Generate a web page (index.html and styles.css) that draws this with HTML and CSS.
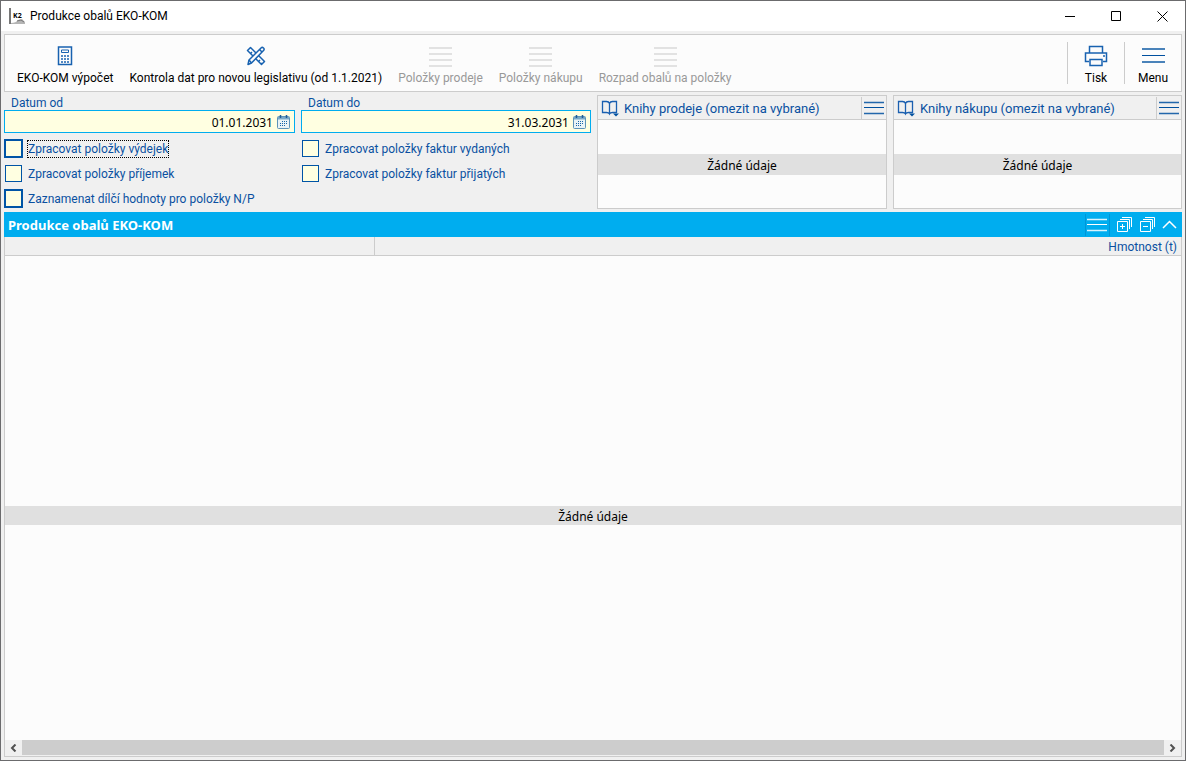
FILE: index.html
```html
<!DOCTYPE html>
<html lang="cs">
<head>
<meta charset="utf-8">
<meta name="viewport" content="width=device-width, initial-scale=1">
<title>Produkce obalů EKO-KOM</title>
<link rel="stylesheet" href="styles.css">
</head>
<body>
<svg class="defs" aria-hidden="true">
  <symbol id="lines" viewBox="0 0 23 20"><path d="M0 3h23M0 16h23" stroke-width="2" opacity=".7"/><path d="M0 9.500h23" stroke-width="1"/></symbol>
  <symbol id="list" viewBox="0 0 23 20"><path d="M0 1h23M0 7h23M0 13h23M0 19h23" stroke-width="2"/></symbol>
  <symbol id="small-lines" viewBox="0 0 20 14"><path d="M0 1.5h20M0 12.5h20" stroke-width="1.6" opacity=".85"/><path d="M0 6.5h20" stroke-width="1"/></symbol>
  <symbol id="calendar" viewBox="0 0 13 14"><rect x=".5" y="1.5" width="12" height="12" rx="1" fill="#e9f3f5" stroke="#5d93b8"/><path d="M1 2h11v2.500H1z" fill="#78a9c8"/><path d="M3.500 0v3M9.500 0v3" stroke="#1f5c96" stroke-width="1.500"/><path d="M5 6.500h6M3 8.500h8M3 10.500h6" stroke="#1766a8" stroke-dasharray="1 1" stroke-width="1.200"/></symbol>
  <symbol id="book" viewBox="0 0 18 17"><path d="M8.500 3.500C8 2 7 1.500 5.500 1.500H1.500v11h4c1.500 0 2.500.5 3 1.500.5-1 1.500-1.500 3-1.500h4v-11h-4C10 1.500 9 2 8.500 3.500zv10" fill="none" stroke="#1a5fb0" stroke-width="1.300"/><path d="M12 13.500h6l-3 3z" fill="#00509f"/></symbol>
</svg>
<div class="window">
  <header class="titlebar">
    <svg class="logo" width="16" height="16" viewBox="0 0 16 16" aria-hidden="true"><path d="M0 0h2v16H0z" fill="#777"/><path d="M2 15q5 0 7-3l4-1 3 3v2H2z" fill="#b5b5b5"/><path d="M8 13l4-1 3 2" fill="none" stroke="#777"/><text x="4" y="10">K2</text></svg>
    <h1 class="caption">Produkce obalů EKO-KOM</h1>
    <div class="window-buttons">
      <button class="window-button" aria-label="Minimalizovat"><svg width="11" height="11" viewBox="0 0 11 11"><path d="M0 5.500h10"/></svg></button>
      <button class="window-button" aria-label="Maximalizovat"><svg width="11" height="11" viewBox="0 0 11 11"><path d="M.5.5h9v9h-9z"/></svg></button>
      <button class="window-button" aria-label="Zavřít"><svg width="11" height="11" viewBox="0 0 11 11"><path d="M.5.500l10 10M10.500.5l-10 10"/></svg></button>
    </div>
  </header>
  <main class="content">
    <nav class="toolbar" aria-label="Nástroje">
      <button class="tool"><svg width="24" height="22" viewBox="0 0 24 22"><path d="M5.500 2h13v17.500h-13z" fill="none" stroke="#1862b0" stroke-width="1.500"/><path d="M8.500 5h7v2.500h-7z" fill="none" stroke="#1862b0"/><path d="M8 11h2M11 11h2M14 11h2M8 14h2M11 14h2M14 14h2M8 17h2M11 17h2M14 17h2" stroke="#1862b0" stroke-width="1.600"/></svg>EKO-KOM výpočet</button>
      <button class="tool"><svg width="24" height="22" viewBox="0 0 24 22"><g fill="#fcfcfc" stroke="#1862b0" stroke-width="1.500" stroke-linejoin="round"><path d="M3.500 5.500l3-3 14 14-3 3z"/><path d="M6.500 8.500l1.500-1.500M14.500 16.500l1.500-1.500M17 19l1-1" /><path d="M4 19.500l1-4.500L17 3q1.200-1.200 2.500 0t0 2.500L7.500 18z"/><path d="M15.500 4.500l2.500 2.500M5 15l2.500 3" fill="none"/></g></svg>Kontrola dat pro novou legislativu (od 1.1.2021)</button>
      <button class="tool" disabled><svg class="list-icon" width="23" height="20"><use href="#list"/></svg>Položky prodeje</button>
      <button class="tool" disabled><svg class="list-icon" width="23" height="20"><use href="#list"/></svg>Položky nákupu</button>
      <button class="tool" disabled><svg class="list-icon" width="23" height="20"><use href="#list"/></svg>Rozpad obalů na položky</button>
      <div class="toolbar-end">
        <button class="tool tool-end"><svg width="24" height="22" viewBox="0 0 24 22"><g fill="none" stroke="#1862b0" stroke-width="1.500"><path d="M5.500 8V1.500h13V8M5 16.500H1.500v-8.500h21v8.500H19"/><path d="M6 14.500h12v6H6z"/></g><path d="M19 11h2" stroke="#1862b0" stroke-width="1.500"/></svg>Tisk</button>
        <button class="tool tool-end"><svg class="lines-icon" width="23" height="20"><use href="#lines"/></svg>Menu</button>
      </div>
    </nav>

    <section class="filters">
      <div class="dates">
        <div class="field">
          <label class="field-label" for="from">Datum od</label>
          <div class="date-box"><input class="date-input" id="from" type="text" value="01.01.2031"><button class="date-button" aria-label="Kalendář"><svg width="13" height="14"><use href="#calendar"/></svg></button></div>
        </div>
        <div class="field">
          <label class="field-label" for="to">Datum do</label>
          <div class="date-box"><input class="date-input" id="to" type="text" value="31.03.2031"><button class="date-button" aria-label="Kalendář"><svg width="13" height="14"><use href="#calendar"/></svg></button></div>
        </div>
        <div class="checks">
          <label class="check"><input class="box box-strong" type="checkbox"><span class="focused">Zpracovat položky výdejek</span></label>
          <label class="check"><input class="box" type="checkbox"><span>Zpracovat položky příjemek</span></label>
          <label class="check"><input class="box box-strong" type="checkbox"><span>Zaznamenat dílčí hodnoty pro položky N/P</span></label>
        </div>
        <div class="checks">
          <label class="check"><input class="box" type="checkbox"><span>Zpracovat položky faktur vydaných</span></label>
          <label class="check"><input class="box" type="checkbox"><span>Zpracovat položky faktur přijatých</span></label>
        </div>
      </div>
      <section class="books">
        <header class="books-head"><svg width="18" height="17" aria-hidden="true"><use href="#book"/></svg><h2 class="books-title">Knihy prodeje (omezit na vybrané)</h2><button class="books-menu" aria-label="Menu"><svg class="lines-icon" width="20" height="14"><use href="#small-lines"/></svg></button></header>
        <div class="books-body"><p class="empty">Žádné údaje</p></div>
      </section>
      <section class="books">
        <header class="books-head"><svg width="18" height="17" aria-hidden="true"><use href="#book"/></svg><h2 class="books-title">Knihy nákupu (omezit na vybrané)</h2><button class="books-menu" aria-label="Menu"><svg class="lines-icon" width="20" height="14"><use href="#small-lines"/></svg></button></header>
        <div class="books-body"><p class="empty">Žádné údaje</p></div>
      </section>
    </section>

    <section class="result">
      <header class="result-head">
        <h2 class="result-title">Produkce obalů EKO-KOM</h2>
        <button class="result-button result-menu" aria-label="Menu"><svg width="20" height="14"><use href="#small-lines"/></svg></button>
        <button class="result-button" aria-label="Rozbalit vše"><svg width="17" height="17" viewBox="0 0 17 17"><path d="M1.500 5.500h10v10h-10zM4 3.500h9.500V13M6 1.500h9.500V11M6.500 8v5M4 10.500h5"/></svg></button>
        <button class="result-button" aria-label="Sbalit vše"><svg width="17" height="17" viewBox="0 0 17 17"><path d="M1.500 5.500h10v10h-10zM4 3.500h9.500V13M6 1.500h9.500V11M4 10.500h5"/></svg></button>
        <button class="result-button" aria-label="Skrýt"><svg width="15" height="17" viewBox="0 0 15 17"><path d="M1 12l6.500-6.500L14 12" stroke-width="1.500"/></svg></button>
      </header>
      <table class="grid">
        <thead><tr><th class="cell cell-first" scope="col"></th><th class="cell" scope="col">Hmotnost (t)</th></tr></thead>
      </table>
      <div class="result-body"><p class="empty empty-main">Žádné údaje</p></div>
      <div class="scroll">
        <button class="scroll-button" aria-label="Vlevo"><svg width="7" height="8" viewBox="0 0 7 8"><path d="M5.500.500L2 4l3.500 3.500"/></svg></button>
        <div class="scroll-thumb"></div>
        <button class="scroll-button" aria-label="Vpravo"><svg width="7" height="8" viewBox="0 0 7 8"><path d="M1.500.500L5 4 1.500 7.500"/></svg></button>
      </div>
    </section>
  </main>
</div>
</body>
</html>
```
FILE: styles.css
```css
* { box-sizing: border-box; }
body, h1, h2, p { margin: 0; font-size: 12px; font-weight: 400; }
body { font-family: Roboto, "Noto Sans", sans-serif; line-height: 16px; color: #000; }
button { margin: 0; padding: 0; border: 0; background: none; font: inherit; color: inherit; }
svg { display: block; flex: none; }
.defs { position: absolute; width: 0; height: 0; }

.window { display: flex; flex-direction: column; min-height: 100vh; border: 1px solid #6b6b6d; background: #f0f0f0; }
.titlebar { display: flex; align-items: center; height: 30px; padding-left: 8px; background: #fff; }
.logo { font: bold 7px "Open Sans", sans-serif; }
.caption { flex: 1; padding-left: 5px; }
.window-buttons { display: flex; }
.window-button { display: grid; place-items: center; width: 46px; height: 30px; }
.window-button svg { fill: none; stroke: #000; }

.content { flex: 1; display: flex; flex-direction: column; gap: 3px; padding: 3px; }
.toolbar { display: flex; align-items: center; gap: 16px; height: 58px; padding-left: 12px; border: 1px solid #ccc; background: #fcfcfc; }
.tool { display: flex; flex-direction: column; align-items: center; gap: 3px; height: 42px; padding-top: 3px; white-space: nowrap; }
.tool:disabled { color: #999; }
.list-icon { height: 22px; padding-top: 2px; stroke: #e2e2e2; }
.lines-icon { stroke: #00509f; }
.toolbar-end { display: flex; margin-left: auto; }
.tool-end { width: 57px; border-left: 1px solid #ccc; }
.tool-end .lines-icon { margin: 1px 0; }

.filters { display: grid; grid-template-columns: 587fr 290fr 289fr; gap: 6px; color: #0a50a1; }
.dates { display: grid; grid-template-columns: 291fr 290fr; grid-template-rows: auto 1fr; column-gap: 6px; row-gap: 5px; }
.field-label { display: block; height: 15px; padding-left: 7px; }
.date-box { display: flex; align-items: center; height: 23px; padding-right: 4px; border: 1px solid #00adef; background: #ffffe1; }
.date-input { flex: 1; min-width: 0; height: 21px; padding: 2px 4px 0; border: 0; outline: 0; background: transparent; font: 12px "Noto Sans", sans-serif; color: #000; text-align: right; }
.checks { display: flex; flex-direction: column; gap: 4px; }
.check { display: flex; align-items: center; gap: 6px; height: 21px; padding: 0 1px; }
.box { appearance: none; flex: none; width: 17px; height: 17px; margin: 0; border: 1px solid #0054a6; background: #ffffe1; }
.box-strong { outline: 1px solid #0054a6; }
.focused { outline: 1px dotted #000; }

.books { display: flex; flex-direction: column; height: 114px; border: 1px solid #ccc; }
.books-head { display: flex; align-items: center; gap: 5px; height: 24px; padding: 1px 2px 0 3px; border-bottom: 1px solid #ccc; }
.books-title { flex: 1; padding-top: 2px; font-size: 13px; }
.books-menu { padding: 4px 0 4px 2px; border-left: 1px solid #ccc; }
.books-body { flex: 1; display: flex; flex-direction: column; justify-content: center; background: #fcfcfc; }
.empty { padding: 4px 0 1px; background: #e0e0e0; font-family: "Noto Sans", sans-serif; color: #000; text-align: center; }

.result { flex: 1; display: flex; flex-direction: column; }
.result-head { display: flex; align-items: center; height: 25px; padding: 0 5px 0 4px; background: #00adef; color: #fff; }
.result-title { flex: 1; font-family: "Noto Sans", sans-serif; font-size: 13px; font-weight: 700; }
.result-button { margin-left: 6px; }
.result-button svg { fill: none; stroke: #fff; }
.result-menu { padding: 4px 2px 4px 1px; border: 1px solid #0096d8; border-width: 0 1px; }
.grid { width: 100%; border-collapse: collapse; table-layout: fixed; color: #0a50a1; }
.cell { height: 18px; padding: 2px 4px 0; border: 1px solid #ccc; border-top: 0; font-weight: 400; text-align: right; }
.cell-first { width: 370px; }
.result-body { flex: 1; display: flex; flex-direction: column; justify-content: center; padding-top: 35px; border: 1px solid #ccc; border-width: 0 1px; background: #fcfcfc; }
.empty-main { padding: 3px 0 0; }
.scroll { display: flex; height: 17px; padding-bottom: 1px; border: 1px solid #ccc; border-top: 0; }
.scroll-button { display: grid; place-items: center; width: 17px; }
.scroll-button svg { fill: none; stroke: #505050; stroke-width: 2; }
.scroll-thumb { flex: 1; background: #cdcdcd; }
```
